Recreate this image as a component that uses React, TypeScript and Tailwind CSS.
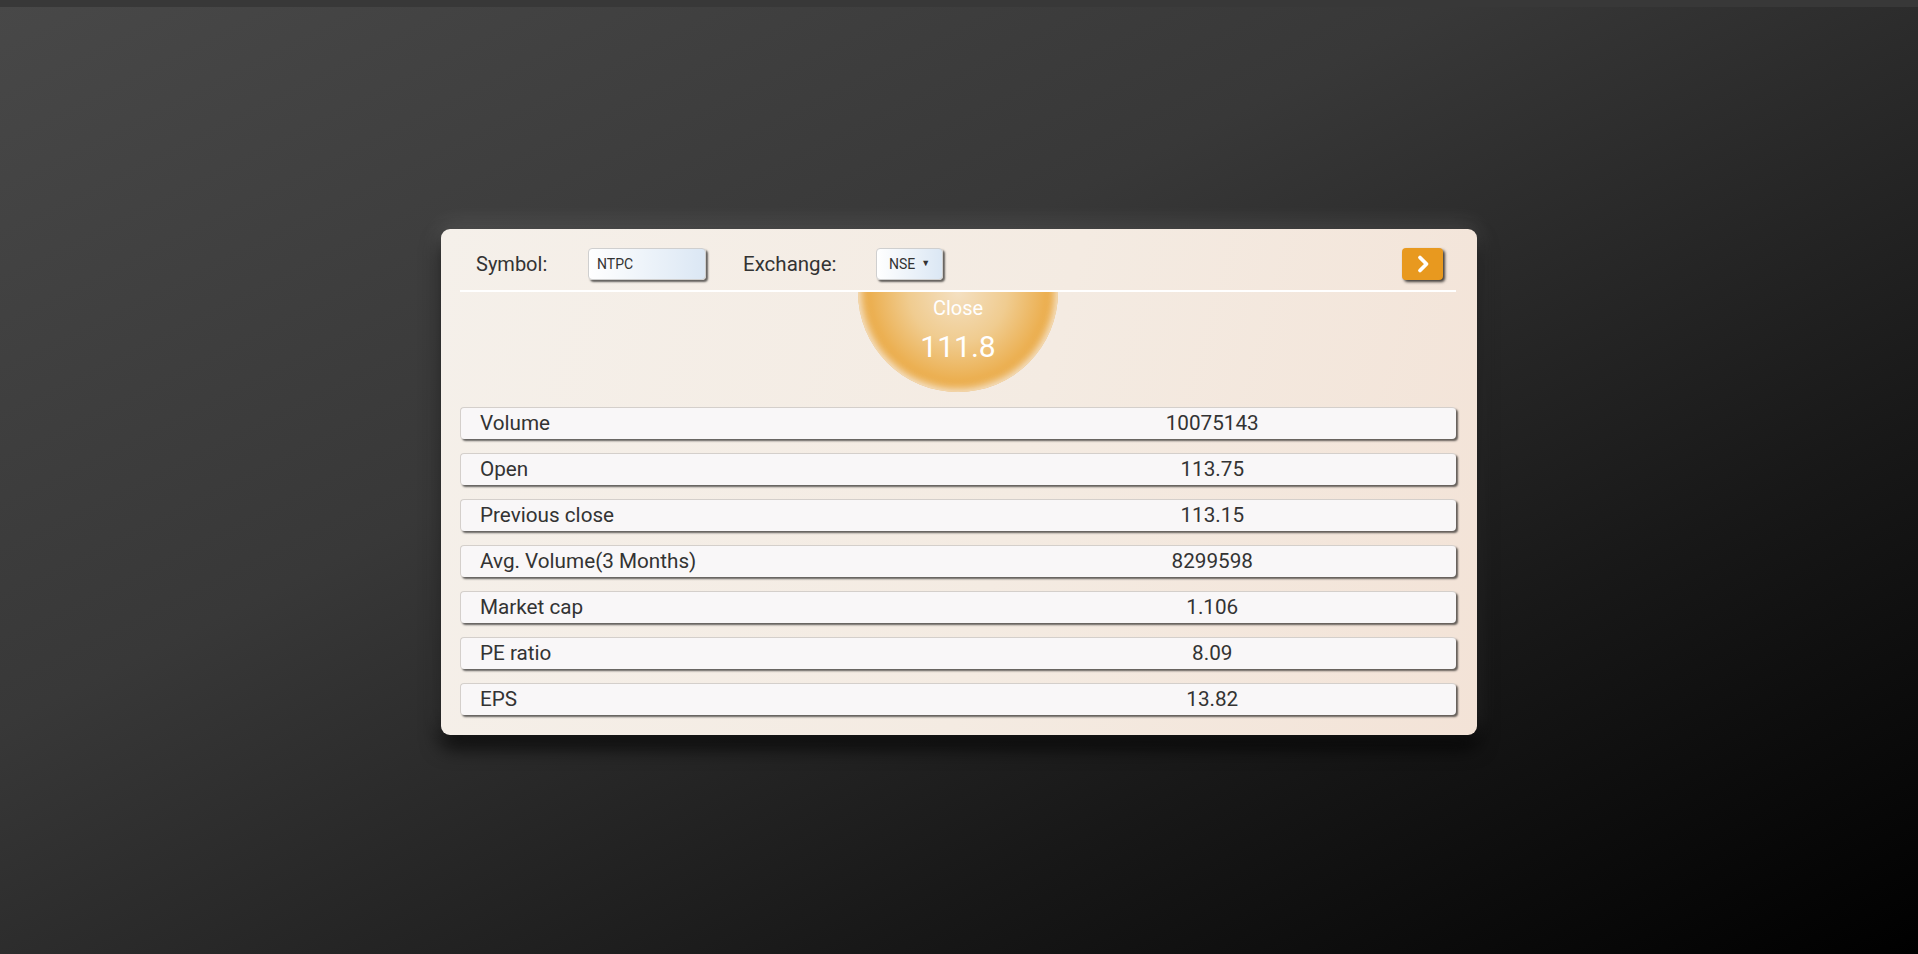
import React from "react";

const rows: [string, string][] = [
  ["Volume", "10075143"],
  ["Open", "113.75"],
  ["Previous close", "113.15"],
  ["Avg. Volume(3 Months)", "8299598"],
  ["Market cap", "1.106"],
  ["PE ratio", "8.09"],
  ["EPS", "13.82"],
];

export default function App() {
  return (
    <div
      className="w-full h-[954px] flex flex-col bg-[linear-gradient(to_bottom_right,#484848_0%,#383838_38%,#181818_72%,#000000_100%)]"
      style={{ fontFamily: "Roboto, 'Liberation Sans', sans-serif" }}
    >
      <div className="h-[7px] bg-[#383838] shrink-0" />
      <div className="flex-1 flex justify-center pt-[222px]">
        <div className="w-[1036px] h-[506px] rounded-[9px] bg-[linear-gradient(105deg,#f5f0ea_0%,#f4ebe2_55%,#f3e3d7_100%)] pl-[19px] pr-[21px] pt-[19px] pb-[20px] flex flex-col shadow-[0_-4px_22px_rgba(255,255,255,0.13),0_12px_20px_rgba(0,0,0,0.85)]">
          <div className="flex items-center h-[32px] pl-[16px] pr-[13px]">
            <span className="w-[112px] text-[20px] text-[#333333] leading-none">Symbol:</span>
            <div className="w-[118px] h-[32px] rounded-[4px] border border-[#cfcfcf] bg-[linear-gradient(to_right,#ffffff,#dbe7f4)] shadow-[2px_2px_2px_rgba(0,0,0,0.6)] flex items-center pl-[8px] text-[14px] text-[#333333]">
              NTPC
            </div>
            <span className="ml-[37px] w-[133px] text-[20.5px] text-[#333333] leading-none">Exchange:</span>
            <div className="w-[67px] h-[32px] rounded-[4px] border border-[#cfcfcf] bg-[linear-gradient(to_right,#ffffff,#dbe7f4)] shadow-[2px_2px_2px_rgba(0,0,0,0.6)] flex items-center pl-[12px] text-[14px] text-[#333333]">
              NSE<span className="ml-[6px] text-[9px]">▼</span>
            </div>
            <div className="ml-auto w-[41px] h-[32px] rounded-[4px] bg-[#e8991f] shadow-[2px_2px_3px_rgba(0,0,0,0.75)] flex items-center justify-center">
              <svg width="16" height="20" viewBox="0 0 16 20">
                <polyline points="5,3.5 11.5,10 5,16.5" fill="none" stroke="#ffffff" strokeWidth="3.8" strokeLinecap="round" strokeLinejoin="round" />
              </svg>
            </div>
          </div>
          <div className="mt-[10px] h-[2px] bg-white" />
          <div className="h-[100px] overflow-hidden flex justify-center">
            <div className="w-[200px] h-[200px] -mt-[100px] shrink-0 rounded-full bg-[radial-gradient(circle,#f4e0c2_0%,#f0cc90_35%,#eaa53a_72%,#e89b22_91%,#f1dcc0_100%)] shadow-[inset_0_0_8px_3px_rgba(246,236,224,0.95)] flex flex-col items-center pt-[104px] text-white">
              <span className="text-[20px] leading-[24px]">Close</span>
              <span className="mt-[9px] text-[30px] leading-[36px]">111.8</span>
            </div>
          </div>
          <div className="mt-[15px] flex flex-col gap-[14px]">
            {rows.map(([k, v]) => (
              <div
                key={k}
                className="h-[32px] rounded-[4px] bg-[#f9f7f8] border-t border-l border-[#d4cfcb] shadow-[2px_2px_2px_rgba(0,0,0,0.6)] flex items-center text-[20.7px] text-[#333333]"
              >
                <span className="w-1/2 pl-[19px]">{k}</span>
                <span className="w-1/2 pl-[10px] text-center">{v}</span>
              </div>
            ))}
          </div>
        </div>
      </div>
    </div>
  );
}
